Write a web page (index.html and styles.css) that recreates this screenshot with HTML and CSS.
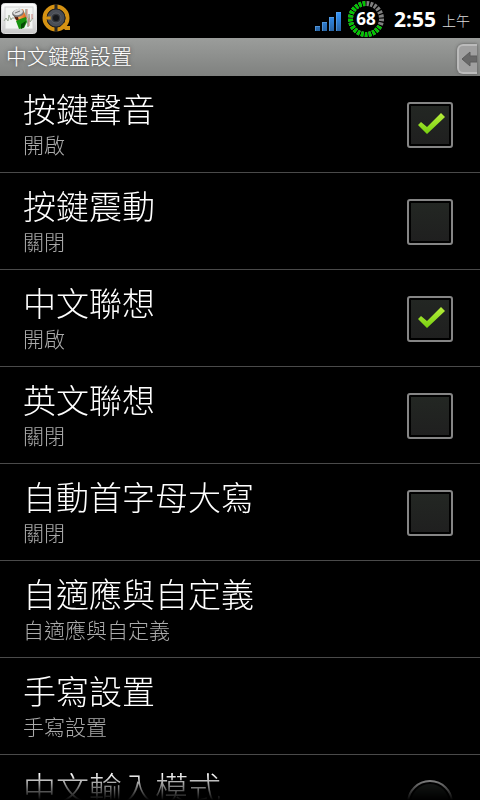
FILE: index.html
```html
<!DOCTYPE html>
<html lang="zh-Hant">
<head>
<meta charset="utf-8">
<meta name="viewport" content="width=device-width, initial-scale=1">
<title>中文鍵盤設置</title>
<link rel="stylesheet" href="styles.css">
</head>
<body>
<header class="status">
  <svg class="app-icon" width="36" height="32" viewBox="0 0 36 32" aria-hidden="true">
    <defs>
      <linearGradient id="card" x2="0" y2="1"><stop offset="0" stop-color="#fff"/><stop offset="1" stop-color="#c9c9c9"/></linearGradient>
      <linearGradient id="can" x2="1" y2="0"><stop offset="0" stop-color="#8e2b0c"/><stop offset=".4" stop-color="#ffad58"/><stop offset="1" stop-color="#d85712"/></linearGradient>
    </defs>
    <rect x=".5" y=".5" width="35" height="30" rx="3" fill="url(#card)" stroke="#ddd"/>
    <rect x="4" y="4" width="28" height="22" fill="#f3f5f3" stroke="#d4d4d4"/>
    <path d="M3 18l2-3 2 3 1-6 2 5 1-2h13l1-9 2 18 1-13 1 8 3-4" fill="none" stroke="#9aa894"/>
    <path d="M26 6v9M28 15v8M31 11v5" stroke="#c77f78" fill="none"/>
    <path d="M12 10l10-4 4 10-9 5z" fill="url(#can)"/>
    <path d="M12 11l4-1 2 8-3-1z" fill="#5d1c0c"/>
    <path d="M15 18l4-2 6-2 1 5-3 6-5 1z" fill="#17920f"/>
    <path d="M20 21l5-3-2 6-3 2z" fill="#064a06"/>
    <ellipse cx="17" cy="10" rx="6" ry="4" transform="rotate(-15 17 10)" fill="#777"/>
    <ellipse cx="17" cy="9" rx="5" ry="3" transform="rotate(-15 17 9)" fill="#ddd"/>
    <path d="M14 10l5-2" stroke="#777"/>
  </svg>
  <svg class="app-icon" width="30" height="30" viewBox="0 0 30 30" aria-hidden="true">
    <circle cx="14" cy="14" r="11.5" fill="none" stroke="#d59213" stroke-width="4"/>
    <path d="M20 20l4 4h4" fill="none" stroke="#d59213" stroke-width="4"/>
    <path d="M14 0v6M14 22v6" stroke="#2a2720" stroke-width="3"/>
    <circle cx="14" cy="14" r="9" fill="#4a4e56" stroke="#25272c"/>
    <path d="M1 14h9" stroke="#d59213" stroke-width="3"/>
    <circle cx="14" cy="14" r="5" fill="#33363b" stroke="#5c6068"/>
    <circle cx="14" cy="14" r="3" fill="#15171b"/>
  </svg>
  <div class="status-right">
    <svg class="signal" width="26" height="19" viewBox="0 0 26 19" aria-label="訊號">
      <defs><linearGradient id="bars" gradientUnits="userSpaceOnUse" x1="0" y1="0" x2="0" y2="19"><stop offset="0" stop-color="#3296ff"/><stop offset="1" stop-color="#2864a4"/></linearGradient></defs>
      <path d="M0 14h5v5H0zM7 10h5v9H7zM14 5h5v14h-5zM21 0h5v19h-5z" fill="url(#bars)"/>
      <path d="M0 14.500h5M7 10.500h5M14 5.500h5M21 .5h5M.5 14v5M7.500 10v9M14.500 5v14M21.500 0v19" stroke="#69a9e8" opacity=".6"/>
    </svg>
    <div class="battery">
      <svg width="38" height="38" viewBox="0 0 38 38" aria-hidden="true">
        <g fill="none" stroke-width="5" transform="rotate(-88 19 19)">
          <circle cx="19" cy="19" r="15.500" stroke="#808080" pathLength="100" stroke-dasharray="2.700 1.300"/>
          <circle cx="19" cy="19" r="15.500" stroke="#00c800" pathLength="100" stroke-dasharray="0 32 2.700 1.300 2.700 1.300 2.700 1.300 2.700 1.300 2.700 1.300 2.700 1.300 2.700 1.300 2.700 1.300 2.700 1.300 2.700 1.300 2.700 1.300 2.700 1.300 2.700 1.300 2.700 1.300 2.700 1.300 2.700 1.300 2.700 1.300"/>
        </g>
      </svg>
      <span class="level">68</span>
    </div>
    <span class="time">2:55</span>
    <span class="meridiem">上午</span>
  </div>
</header>
<div class="titlebar">
  <h1>中文鍵盤設置</h1>
  <button class="drawer" type="button" aria-label="返回">
    <svg width="16" height="18" viewBox="0 0 16 18" aria-hidden="true"><path d="M1 9l8-7v4h7v6H9v4z" fill="#686868" stroke="#5c5c5c"/></svg>
  </button>
</div>
<main class="list">
  <label class="row"><span class="text"><span class="name">按鍵聲音</span><span class="sub">開啟</span></span><input class="check" type="checkbox" checked></label>
  <label class="row"><span class="text"><span class="name">按鍵震動</span><span class="sub">關閉</span></span><input class="check" type="checkbox"></label>
  <label class="row"><span class="text"><span class="name">中文聯想</span><span class="sub">開啟</span></span><input class="check" type="checkbox" checked></label>
  <label class="row"><span class="text"><span class="name">英文聯想</span><span class="sub">關閉</span></span><input class="check" type="checkbox"></label>
  <label class="row"><span class="text"><span class="name">自動首字母大寫</span><span class="sub">關閉</span></span><input class="check" type="checkbox"></label>
  <a class="row" href="#adaptive"><span class="text"><span class="name">自適應與自定義</span><span class="sub">自適應與自定義</span></span></a>
  <a class="row" href="#handwriting"><span class="text"><span class="name">手寫設置</span><span class="sub">手寫設置</span></span></a>
  <button class="row" type="button"><span class="text"><span class="name">中文輸入模式</span></span>
    <svg class="more" width="46" height="46" viewBox="0 0 46 46" aria-hidden="true">
      <circle cx="23" cy="23" r="22" fill="#000" stroke="#aaa" stroke-width="2"/>
      <circle cx="23" cy="23" r="19" fill="#1d211e"/>
      <path d="M15 20h16l-8 9z" fill="#888"/>
    </svg>
  </button>
</main>
</body>
</html>
```
FILE: styles.css
```css
* { box-sizing: border-box; }

body {
  margin: 0;
  height: 100vh;
  display: flex;
  flex-direction: column;
  overflow: hidden;
  background: #000;
  color: #fff;
  font-family: "Noto Sans CJK TC", sans-serif;
  font-weight: 300;
}

.status {
  flex: none;
  height: 38px;
  display: flex;
  align-items: center;
  gap: 5px;
  padding: 0 10px 0 1px;
}

.status-right {
  margin-left: auto;
  display: flex;
  align-items: center;
}

.signal { margin: 5px 6px 0 0; }

.battery { display: grid; place-items: center; height: 38px; }
.battery > * { grid-area: 1 / 1; }

.level, .time {
  font-family: "Open Sans", "Noto Sans", sans-serif;
  font-weight: 700;
}

.level { font-size: 17px; line-height: 38px; }
.time { margin-left: 9px; font-size: 21px; line-height: 38px; }
.meridiem { margin-left: 6px; font-size: 14px; line-height: 20px; padding-top: 2px; color: #ddd; }

.titlebar {
  flex: none;
  height: 38px;
  display: flex;
  align-items: flex-start;
  justify-content: space-between;
  padding: 0 3px 0 6px;
  background: linear-gradient(#9b9d9b, #7f817f);
}

.titlebar h1 {
  margin: 0;
  font-size: 21px;
  line-height: 34px;
  font-weight: 300;
  text-shadow: 0 0 4px #444;
}

.drawer {
  width: 20px;
  height: 30px;
  margin-top: 6px;
  padding: 0 0 0 2px;
  display: flex;
  align-items: center;
  overflow: hidden;
  border: 2px solid #bbb;
  border-right: 0;
  border-radius: 6px 0 0 6px;
  background: #a0a0a0;
  box-shadow: 0 0 3px #555;
}

.drawer svg { flex: none; }

.list {
  flex: 1;
  min-height: 0;
  overflow: hidden;
  mask-image: linear-gradient(#000 calc(100% - 26px), transparent);
}

.row {
  width: 100%;
  height: 97px;
  display: flex;
  align-items: center;
  justify-content: space-between;
  padding: 0 27px 0 23px;
  border: 0;
  border-bottom: 1px solid #4a4a4a;
  background: none;
  color: #fff;
  font: inherit;
  text-align: left;
  text-decoration: none;
}

.text { align-self: flex-start; padding-top: 8px; }
.name, .sub { display: block; }
.name { font-size: 33px; line-height: 48px; }
.sub { font-size: 21px; line-height: 24px; color: #aaa; }

.check {
  appearance: none;
  width: 46px;
  height: 46px;
  margin: 2px 0 0;
  border: 2px solid #858585;
  border-radius: 3px;
  box-shadow: inset 0 0 0 2px #000;
  background: linear-gradient(#232723, #1f1f1f);
}

.check:checked {
  background:
    url("data:image/svg+xml,%3Csvg xmlns='http://www.w3.org/2000/svg' viewBox='0 0 42 42'%3E%3Cdefs%3E%3ClinearGradient id='g' x2='0' y2='1'%3E%3Cstop stop-color='%23b9ef3c'/%3E%3Cstop offset='1' stop-color='%2377cf10'/%3E%3C/linearGradient%3E%3C/defs%3E%3Cpath d='M9 21l3-3 6 5L32 9l4 4L18 30z' fill='url(%23g)'/%3E%3C/svg%3E") center / 42px 42px no-repeat,
    linear-gradient(#232723, #1f1f1f);
}

.more { flex: none; }
```
